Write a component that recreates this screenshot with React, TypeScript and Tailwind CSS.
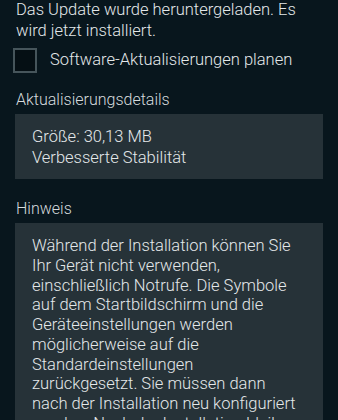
export default function App() {
    return (
        <div className="h-[420px] w-[338px] overflow-hidden bg-[#08161d] font-light text-[#e4e8ea]" style={{ fontFamily: "Roboto, 'Noto Sans', sans-serif" }}>
            <div className="px-4 text-[16.5px] leading-[21px]">
                <p className="-mt-[1px]">Das Update wurde heruntergeladen. Es wird jetzt installiert.</p>
            </div>
            <label className="mt-[7px] flex items-center gap-[13px] pl-[13px]">
                <span className="h-[25px] w-[24px] border-2 border-[#46555b] bg-[#050f14]" />
                <span className="text-[16.5px]">Software-Aktualisierungen planen</span>
            </label>
            <h2 className="mt-[16px] px-4 text-[16px] leading-[21px] text-[#d6dbdd]">Aktualisierungsdetails</h2>
            <section className="mx-[15px] mt-[4px] bg-[#263238] px-[17px] pt-[12px] pb-[11px] text-[16.5px] leading-[21px]">
                <p>Größe: 30,13 MB</p>
                <p>Verbesserte Stabilität</p>
            </section>
            <h2 className="mt-[19px] px-4 text-[16px] leading-[21px] text-[#d6dbdd]">Hinweis</h2>
            <section className="mx-[15px] mt-[4px] bg-[#263238] pt-[13px] pr-[12px] pl-[17px] text-[16.5px] leading-[19.75px]">
                <p>
                    Während der Installation können Sie<br />
                    Ihr Gerät nicht verwenden,<br />
                    einschließlich Notrufe. Die Symbole<br />
                    auf dem Startbildschirm und die<br />
                    Geräteeinstellungen werden<br />
                    möglicherweise auf die<br />
                    Standardeinstellungen<br />
                    zurückgesetzt. Sie müssen dann<br />
                    nach der Installation neu konfiguriert<br />
                    werden. Nach der Installation bleiben<br />
                    Ihre persönlichen Daten erhalten.
                </p>
            </section>
        </div>
    );
}
